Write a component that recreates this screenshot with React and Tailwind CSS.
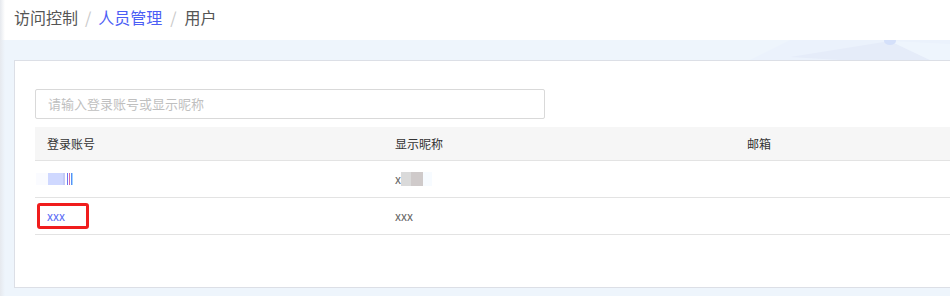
import React from 'react';

const font = { fontFamily: '"Noto Sans CJK SC", "Liberation Sans", sans-serif' };

// 打码后的账号（马赛克块）
const MaskedAccount = () => (
  <div className="flex items-center h-[12px]">
    <span className="w-[12px] h-[12px] bg-[#fafbff]" />
    <span className="w-[15px] h-[12px] bg-[#cfd8ff]" />
    <span className="w-[2px] h-[12px] bg-[#c3cbf6]" />
    <span className="w-[2px] h-[12px] bg-white" />
    <span className="w-[1px] h-[12px] bg-[#6a74f2]" />
    <span className="w-[1px] h-[12px] bg-white" />
    <span className="w-[1px] h-[12px] bg-[#d86aa8]" />
    <span className="w-[1px] h-[12px] bg-white" />
    <span className="w-[1px] h-[12px] bg-[#5b8ef5]" />
    <span className="w-[1px] h-[12px] bg-[#9fd6ff]" />
  </div>
);

const MaskedName = () => (
  <div className="flex items-center h-[14px]">
    <span className="text-[12px] text-[#666] leading-none">x</span>
    <span className="w-[10px] h-[14px] bg-[#dadada]" />
    <span className="w-[12px] h-[14px] bg-[#cfcaca]" />
    <span className="w-[9px] h-[14px] bg-[#f7fbff]" />
  </div>
);

export default function App() {
  return (
    <div className="w-[950px] h-[296px] overflow-hidden bg-[#eef5fc] relative" style={font}>
      {/* 左侧阴影 */}
      <div className="absolute left-0 top-0 bottom-0 w-[5px] bg-gradient-to-r from-[#e6e9ee] to-transparent z-10" />

      {/* 面包屑 */}
      <div className="h-[40px] bg-white flex items-center pl-[14px] text-[16px] pb-[7px]">
        <span className="text-[#555]">访问控制</span>
        <span className="text-[#c8c8c8] mx-[7px]">/</span>
        <span className="text-[#4c5ef5]">人员管理</span>
        <span className="text-[#c8c8c8] mx-[8px]">/</span>
        <span className="text-[#555]">用户</span>
      </div>

      {/* 装饰条 */}
      <div className="h-[20px] relative">
        <svg className="absolute right-0 top-0" width="200" height="20" viewBox="0 0 200 20">
          <polygon points="0,20 40,0 200,0 200,20" fill="#ebf2fc" />
          <polygon points="40,17 140,1 180,20 90,20" fill="#e5ecf9" />
          <polygon points="140,1 200,4 200,20 180,20" fill="#eef5fd" />
          <ellipse cx="140" cy="1" rx="6" ry="4" fill="#d4e0fa" />
        </svg>
      </div>

      {/* 卡片 */}
      <div className="ml-[14px] mr-[-30px] h-[228px] bg-white border border-[#dcdfe6] pt-[28px] px-[20px]">
        <div className="w-[510px] h-[30px] border border-[#d9d9d9] rounded-[2px] flex items-center pl-[12px] text-[13px] text-[#bfbfbf]">
          请输入登录账号或显示昵称
        </div>

        <div className="mt-[8px] text-[12px]">
          <div className="grid grid-cols-[360px_350px_1fr] h-[34px] items-center bg-[#f6f6f6] border-b border-[#e3e3e3] text-[#333]">
            <div className="pl-[12px]">登录账号</div>
            <div>显示昵称</div>
            <div className="pl-[2px]">邮箱</div>
          </div>
          <div className="grid grid-cols-[360px_350px_1fr] h-[37px] items-center border-b border-[#e3e3e3]">
            <div className="pl-[1px]"><MaskedAccount /></div>
            <div><MaskedName /></div>
            <div />
          </div>
          <div className="grid grid-cols-[360px_350px_1fr] h-[37px] items-center border-b border-[#e3e3e3]">
            <div className="relative h-full flex items-center pl-[12px] text-[#5b6cf5]">
              xxx
              <span className="absolute left-[2px] top-[5px] w-[52px] h-[26px] border-[3px] border-[#f01d1d] rounded-[3px]" />
            </div>
            <div className="text-[#666]">xxx</div>
            <div />
          </div>
        </div>
      </div>
    </div>
  );
}
